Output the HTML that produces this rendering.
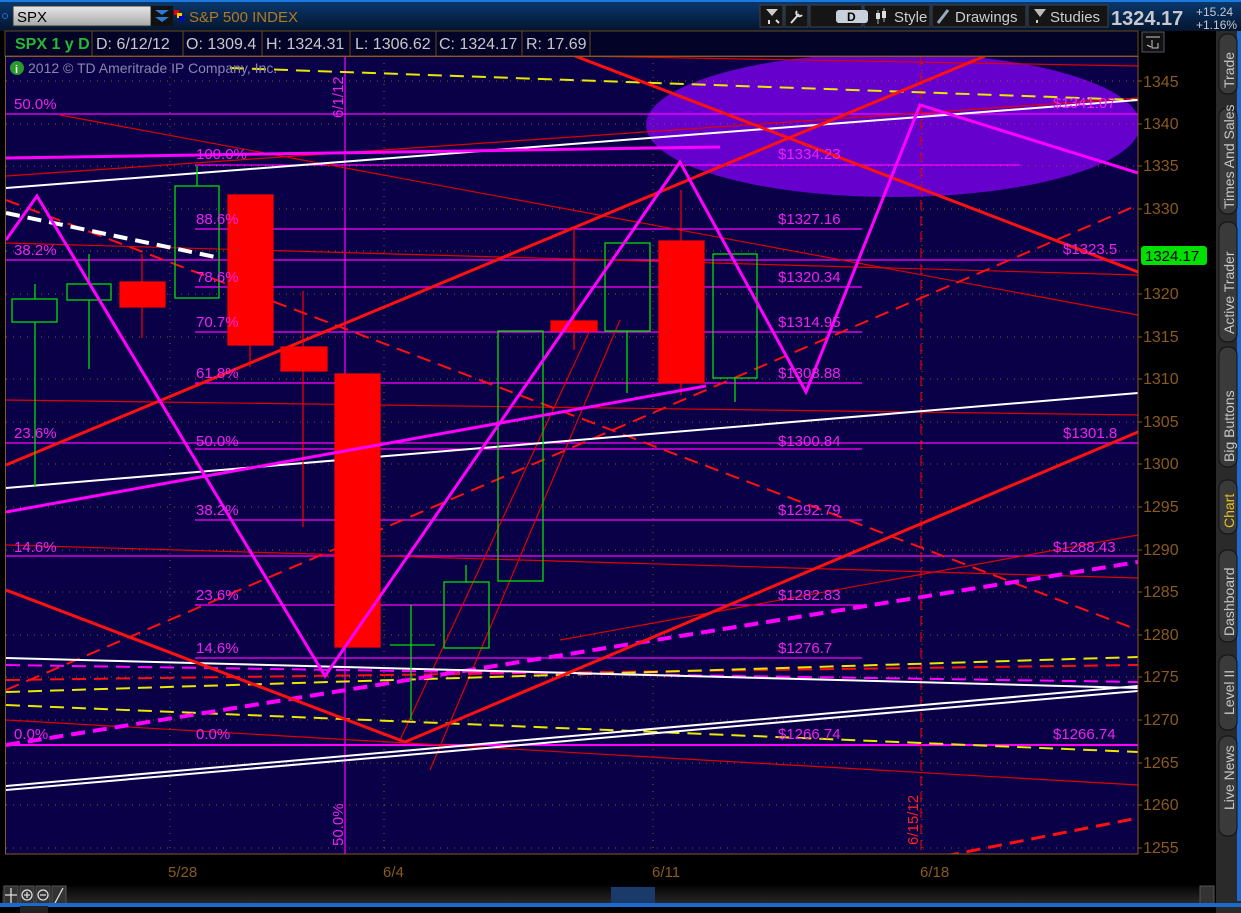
<!DOCTYPE html>
<html><head><meta charset="utf-8"><style>
html,body{margin:0;padding:0;width:1241px;height:913px;overflow:hidden;background:#000}
svg{display:block}
</style></head><body>
<svg width="1241" height="913" xmlns="http://www.w3.org/2000/svg" font-family="Liberation Sans, DejaVu Sans, sans-serif">
<defs>
<linearGradient id="tb" x1="0" y1="0" x2="0" y2="1"><stop offset="0" stop-color="#0a3a70"/><stop offset="1" stop-color="#04142e"/></linearGradient>
<linearGradient id="sb" x1="0" y1="0" x2="0" y2="1"><stop offset="0" stop-color="#050505"/><stop offset="1" stop-color="#2a2a2a"/></linearGradient>
<linearGradient id="inp" x1="0" y1="0" x2="0" y2="1"><stop offset="0" stop-color="#e8e8e8"/><stop offset="1" stop-color="#a8a8a8"/></linearGradient>
<clipPath id="pc"><rect x="6" y="56" width="1132" height="798"/></clipPath>
</defs>

<rect x="0" y="0" width="1241" height="31" fill="url(#tb)"/>
<rect x="0" y="0" width="1241" height="2" fill="#1a7ae0"/>
<circle cx="5" cy="16" r="2.5" fill="none" stroke="#2a6ad0"/>
<rect x="13" y="6" width="138" height="20" fill="url(#inp)" stroke="#333"/>
<text x="17" y="22" font-size="15" fill="#000">SPX</text>
<rect x="151" y="6" width="22" height="20" fill="#111"/>
<path d="M155 10 L169 10 L162 15 Z M155 17 L169 17 L162 22 Z" fill="#2a7ad8"/>
<rect x="174" y="10" width="5" height="5" fill="#e00"/><rect x="177" y="13" width="5" height="5" fill="#fc0"/><rect x="179" y="16" width="5" height="5" fill="#00c"/>
<text x="189" y="22" font-size="15" fill="#b07a20">S&amp;P 500 INDEX</text>
<g fill="#151515" stroke="#444">
<rect x="760" y="5" width="23" height="22"/><rect x="785" y="5" width="23" height="22"/><rect x="810" y="5" width="52" height="22"/>
<rect x="864" y="5" width="66" height="22"/><rect x="932" y="5" width="94" height="22"/><rect x="1028" y="5" width="80" height="22"/>
</g>
<rect x="836" y="10" width="32" height="13" rx="3" fill="#c8d0dc"/>
<text x="847" y="21" font-size="12" font-weight="bold" fill="#000">D</text>
<path d="M766 9 L778 9 L772 16 Z" fill="#ccc"/><path d="M769 20 v4 M776 20 l3 3" stroke="#ddd" stroke-width="2"/>
<path d="M791 23 L799 14" stroke="#ddd" stroke-width="2"/><path d="M797 11 a3 3 0 1 0 5 4" stroke="#ddd" stroke-width="2" fill="none"/>
<path d="M878 10 v14 M884 8 v14" stroke="#aaa"/><rect x="876" y="13" width="4" height="6" fill="#ddd"/><rect x="882" y="11" width="4" height="7" fill="#ddd"/>
<text x="894" y="22" font-size="15" fill="#ccc">Style</text>
<path d="M938 23 L948 10" stroke="#9ab" stroke-width="3"/>
<text x="955" y="22" font-size="15" fill="#ccc">Drawings</text>
<path d="M1034 9 L1046 9 L1040 17 Z" fill="#bbb"/><path d="M1037 20 v3" stroke="#ccc" stroke-width="2"/>
<text x="1050" y="22" font-size="15" fill="#ccc">Studies</text>
<text x="1111" y="25" font-size="20" font-weight="bold" fill="#c8c8d0">1324.17</text>
<text x="1196" y="16" font-size="12" fill="#c8c8d0">+15.24</text>
<text x="1196" y="29" font-size="12" fill="#c8c8d0">+1.16%</text>

<rect x="5" y="31" width="1133" height="25" fill="#030328"/>
<rect x="5" y="31" width="1133" height="25" fill="none" stroke="#6a4a1a"/>
<g stroke="#6a4a1a"><line x1="92" y1="31" x2="92" y2="56"/><line x1="183" y1="31" x2="183" y2="56"/><line x1="262" y1="31" x2="262" y2="56"/><line x1="350" y1="31" x2="350" y2="56"/><line x1="436" y1="31" x2="436" y2="56"/><line x1="522" y1="31" x2="522" y2="56"/><line x1="590" y1="31" x2="590" y2="56"/></g>
<g font-size="16" fill="#c8c8c8">
<text x="15" y="49" fill="#22bb33" font-weight="bold">SPX 1 y D</text>
<text x="96" y="49">D: 6/12/12</text><text x="186" y="49">O: 1309.4</text><text x="266" y="49">H: 1324.31</text>
<text x="355" y="49">L: 1306.62</text><text x="439" y="49">C: 1324.17</text><text x="526" y="49">R: 17.69</text>
</g>

<rect x="5" y="56" width="1133" height="798" fill="#0a0048"/>
<g clip-path="url(#pc)">
<ellipse cx="893" cy="125" rx="247" ry="72" fill="#6600cc"/>
<g stroke="#8a5a20" stroke-width="1" stroke-dasharray="1,6">
<line x1="6" y1="81" x2="1138" y2="81"/><line x1="6" y1="124" x2="1138" y2="124"/><line x1="6" y1="166" x2="1138" y2="166"/><line x1="6" y1="209" x2="1138" y2="209"/><line x1="6" y1="251" x2="1138" y2="251"/><line x1="6" y1="294" x2="1138" y2="294"/><line x1="6" y1="337" x2="1138" y2="337"/><line x1="6" y1="379" x2="1138" y2="379"/><line x1="6" y1="422" x2="1138" y2="422"/><line x1="6" y1="464" x2="1138" y2="464"/><line x1="6" y1="507" x2="1138" y2="507"/><line x1="6" y1="550" x2="1138" y2="550"/><line x1="6" y1="592" x2="1138" y2="592"/><line x1="6" y1="635" x2="1138" y2="635"/><line x1="6" y1="677" x2="1138" y2="677"/><line x1="6" y1="720" x2="1138" y2="720"/><line x1="6" y1="763" x2="1138" y2="763"/><line x1="6" y1="805" x2="1138" y2="805"/><line x1="6" y1="848" x2="1138" y2="848"/>
<line x1="170" y1="56" x2="170" y2="854"/><line x1="384" y1="56" x2="384" y2="854"/><line x1="653" y1="56" x2="653" y2="854"/><line x1="922" y1="56" x2="922" y2="854"/>
</g>

<g stroke="#ff00ff" stroke-width="1.2">
<line x1="6" y1="114" x2="1138" y2="114"/><line x1="195" y1="165" x2="1020" y2="165"/><line x1="195" y1="229" x2="862" y2="229"/>
<line x1="6" y1="260" x2="1138" y2="260"/><line x1="195" y1="287" x2="862" y2="287"/><line x1="195" y1="332" x2="862" y2="332"/>
<line x1="195" y1="383" x2="862" y2="383"/><line x1="6" y1="443" x2="1138" y2="443"/><line x1="195" y1="449" x2="862" y2="449"/>
<line x1="195" y1="520" x2="862" y2="520"/><line x1="6" y1="556" x2="1138" y2="556"/><line x1="195" y1="605" x2="862" y2="605"/>
<line x1="195" y1="658" x2="862" y2="658"/><line x1="6" y1="745" x2="1138" y2="745" stroke-width="2"/>
<line x1="345" y1="56" x2="345" y2="854"/>
</g>

<g stroke="#e00000" stroke-width="1.2" fill="none">
<line x1="6" y1="243" x2="1138" y2="275"/><line x1="6" y1="545" x2="1138" y2="578"/><line x1="6" y1="400" x2="1138" y2="415"/>
<line x1="6" y1="720" x2="1138" y2="785"/><line x1="60" y1="115" x2="1138" y2="315"/><line x1="6" y1="176" x2="1138" y2="98"/>
<line x1="400" y1="740" x2="590" y2="330"/><line x1="430" y1="770" x2="620" y2="320"/><line x1="560" y1="640" x2="1138" y2="535"/>
<line x1="575" y1="56" x2="1138" y2="66"/>
</g>
<line x1="921" y1="56" x2="921" y2="854" stroke="#e00000" stroke-width="1.2" stroke-dasharray="10,6"/>

<g fill="none" stroke-width="2" stroke-dasharray="14,8">
<line x1="6" y1="200" x2="1138" y2="630" stroke="#ff1010"/>
<line x1="6" y1="690" x2="1138" y2="205" stroke="#ff1010"/>
<line x1="945" y1="856" x2="1138" y2="818" stroke="#ff1010" stroke-width="3"/>
<line x1="6" y1="680" x2="1138" y2="665" stroke="#ff1010"/>
<line x1="230" y1="68" x2="1138" y2="100" stroke="#e8e800"/>
<line x1="6" y1="705" x2="1138" y2="752" stroke="#e8e800"/>
<line x1="6" y1="692" x2="1138" y2="657" stroke="#e8e800"/>
<line x1="6" y1="665" x2="1138" y2="682" stroke="#ff00ff"/>
<line x1="6" y1="745" x2="1138" y2="562" stroke="#ff00ff" stroke-width="4"/>
<line x1="6" y1="213" x2="220" y2="258" stroke="#ffffff" stroke-width="4"/>
</g>

<g stroke="#ffffff" stroke-width="2" fill="none">
<line x1="6" y1="188" x2="1138" y2="100"/><line x1="6" y1="488" x2="1138" y2="393"/>
<line x1="6" y1="658" x2="1138" y2="688"/><line x1="6" y1="786" x2="1138" y2="686"/><line x1="6" y1="790" x2="1138" y2="691"/>
</g>

<g stroke="#ff1010" stroke-width="3" fill="none">
<line x1="6" y1="465" x2="985" y2="56"/><polyline points="6,590 405,742 1138,432"/>
<line x1="575" y1="56" x2="1138" y2="272"/>
</g>

<g stroke="#00dd00" stroke-width="1.3" fill="none">
<line x1="35" y1="284" x2="35" y2="487"/><rect x="12" y="299" width="45" height="23" fill="#0a0048"/>
<line x1="89" y1="254" x2="89" y2="369"/><rect x="67" y="284" width="44" height="16" fill="#0a0048"/>
<line x1="197" y1="166" x2="197" y2="186"/><rect x="175" y="186" width="44" height="112"/>
<line x1="411" y1="605" x2="411" y2="720"/><line x1="390" y1="645" x2="435" y2="645"/>
<line x1="466" y1="565" x2="466" y2="582"/><rect x="444" y="582" width="45" height="66"/>
<rect x="498" y="331" width="45" height="250"/>
<line x1="627" y1="331" x2="627" y2="393"/><rect x="605" y="243" width="45" height="88"/>
<line x1="735" y1="378" x2="735" y2="402"/><rect x="713" y="254" width="44" height="124"/>
</g>
<g fill="#ff0000" stroke="#ff0000" stroke-width="1.2">
<line x1="142" y1="254" x2="142" y2="338"/><rect x="120" y="282" width="45" height="25"/>
<line x1="250" y1="345" x2="250" y2="367"/><rect x="228" y="195" width="45" height="150"/>
<line x1="303" y1="291" x2="303" y2="527"/><rect x="281" y="347" width="46" height="24"/>
<rect x="335" y="374" width="45" height="273"/>
<line x1="574" y1="230" x2="574" y2="350"/><rect x="551" y="321" width="46" height="10"/>
<line x1="681" y1="190" x2="681" y2="395"/><rect x="659" y="241" width="45" height="142"/>
</g>

<g stroke="#ff00ff" fill="none" stroke-width="3">
<polyline points="6,240 37,196 325,676 680,162 806,392 920,105 1138,173"/>
<line x1="6" y1="158" x2="720" y2="147"/>
<line x1="6" y1="512" x2="706" y2="386"/>
</g>

<g font-size="15" fill="#ee22ee">
<text x="14" y="109">50.0%</text><text x="14" y="255">38.2%</text><text x="14" y="438">23.6%</text><text x="14" y="552">14.6%</text><text x="14" y="739">0.0%</text>
<text x="196" y="159">100.0%</text><text x="196" y="224">88.6%</text><text x="196" y="282">78.6%</text><text x="196" y="327">70.7%</text><text x="196" y="378">61.8%</text><text x="196" y="446">50.0%</text><text x="196" y="515">38.2%</text><text x="196" y="600">23.6%</text><text x="196" y="653">14.6%</text><text x="196" y="739">0.0%</text>
<text x="778" y="159">$1334.23</text><text x="778" y="224">$1327.16</text><text x="778" y="282">$1320.34</text><text x="778" y="327">$1314.95</text><text x="778" y="378">$1308.88</text><text x="778" y="446">$1300.84</text><text x="778" y="515">$1292.79</text><text x="778" y="600">$1282.83</text><text x="778" y="653">$1276.7</text><text x="778" y="739">$1266.74</text>
<text x="1053" y="108">$1341.07</text><text x="1063" y="254">$1323.5</text><text x="1063" y="438">$1301.8</text><text x="1053" y="552">$1288.43</text><text x="1053" y="739">$1266.74</text>
<text transform="translate(343,118) rotate(-90)">6/1/12</text>
<text transform="translate(343,846) rotate(-90)">50.0%</text>
</g>
<text transform="translate(918,845) rotate(-90)" font-size="15" fill="#ff2020">6/15/12</text>
<circle cx="17" cy="68" r="7" fill="#2a9a2a"/><text x="15" y="73" font-size="11" font-weight="bold" fill="#fff">i</text>
<text x="28" y="73" font-size="14" fill="#8888aa">2012 © TD Ameritrade IP Company, Inc.</text>
</g>
<rect x="5.5" y="56.5" width="1132.5" height="797.5" fill="none" stroke="#8a5a20"/>

<g font-size="16" fill="#8a5a20">
<text x="1143" y="87">1345</text><text x="1143" y="129">1340</text><text x="1143" y="171">1335</text><text x="1143" y="214">1330</text><text x="1143" y="299">1320</text><text x="1143" y="342">1315</text><text x="1143" y="384">1310</text><text x="1143" y="427">1305</text><text x="1143" y="469">1300</text><text x="1143" y="512">1295</text><text x="1143" y="555">1290</text><text x="1143" y="597">1285</text><text x="1143" y="640">1280</text><text x="1143" y="682">1275</text><text x="1143" y="725">1270</text><text x="1143" y="768">1265</text><text x="1143" y="810">1260</text><text x="1143" y="853">1255</text>
</g>
<g stroke="#8a5a20"><line x1="1138" y1="81" x2="1142" y2="81"/><line x1="1138" y1="124" x2="1142" y2="124"/><line x1="1138" y1="166" x2="1142" y2="166"/><line x1="1138" y1="209" x2="1142" y2="209"/><line x1="1138" y1="294" x2="1142" y2="294"/><line x1="1138" y1="337" x2="1142" y2="337"/><line x1="1138" y1="379" x2="1142" y2="379"/><line x1="1138" y1="422" x2="1142" y2="422"/><line x1="1138" y1="464" x2="1142" y2="464"/><line x1="1138" y1="507" x2="1142" y2="507"/><line x1="1138" y1="550" x2="1142" y2="550"/><line x1="1138" y1="592" x2="1142" y2="592"/><line x1="1138" y1="635" x2="1142" y2="635"/><line x1="1138" y1="677" x2="1142" y2="677"/><line x1="1138" y1="720" x2="1142" y2="720"/><line x1="1138" y1="763" x2="1142" y2="763"/><line x1="1138" y1="805" x2="1142" y2="805"/><line x1="1138" y1="848" x2="1142" y2="848"/></g>
<rect x="1141" y="246" width="66" height="19" rx="3" fill="#00e000"/>
<text x="1145" y="261" font-size="15" fill="#000">1324.17</text>
<rect x="1142" y="32" width="22" height="20" fill="#111" stroke="#556"/>
<path d="M1146 37 h14 M1147 45 l4 2 M1152 40 v8 h6 v-5" stroke="#ccc" fill="none"/>

<rect x="1216" y="31" width="25" height="882" fill="#2a2a2a"/>
<rect x="1237" y="31" width="4" height="870" fill="#1a6ad0"/>
<g fill="#3a3a3a" stroke="#111">
<rect x="1219" y="34" width="18" height="60" rx="8"/><rect x="1219" y="108" width="18" height="106" rx="8"/><rect x="1219" y="222" width="18" height="120" rx="8"/><rect x="1219" y="347" width="18" height="120" rx="8"/><rect x="1219" y="480" width="18" height="54" rx="8"/><rect x="1219" y="550" width="18" height="92" rx="8"/><rect x="1219" y="655" width="18" height="75" rx="8"/><rect x="1219" y="736" width="18" height="100" rx="8"/>
</g>
<g font-size="14" fill="#c8c8c8">
<text transform="translate(1234,88) rotate(-90)">Trade</text>
<text transform="translate(1234,209) rotate(-90)">Times And Sales</text>
<text transform="translate(1234,334) rotate(-90)">Active Trader</text>
<text transform="translate(1234,462) rotate(-90)">Big Buttons</text>
<text transform="translate(1234,528) rotate(-90)" fill="#e8c020">Chart</text>
<text transform="translate(1234,636) rotate(-90)">Dashboard</text>
<text transform="translate(1234,715) rotate(-90)">Level II</text>
<text transform="translate(1234,810) rotate(-90)">Live News</text>
</g>

<g font-size="15" fill="#8a5a20">
<text x="168" y="877">5/28</text><text x="383" y="877">6/4</text><text x="652" y="877">6/11</text><text x="920" y="877">6/18</text>
</g>
<rect x="2" y="886" width="1212" height="19" fill="url(#sb)"/>
<g fill="#333" stroke="#555"><rect x="4" y="886" width="14" height="19"/><rect x="20" y="886" width="14" height="19"/><rect x="36" y="886" width="14" height="19"/><rect x="52" y="886" width="14" height="19"/><rect x="1200" y="886" width="14" height="19"/></g>
<g stroke="#ddd" fill="none" stroke-width="1.3"><path d="M11 888 v15 M5 895 h12"/><circle cx="27" cy="895" r="5"/><path d="M24 895 h6 M27 892 v6"/><circle cx="43" cy="895" r="5"/><path d="M40 895 h6"/><path d="M55 903 L63 888"/></g>
<rect x="611" y="887" width="44" height="17" fill="#1a3a6a"/>
<rect x="0" y="903" width="1241" height="4" fill="#1a6ad0"/>
<rect x="20" y="906" width="28" height="7" fill="#222"/>
</svg>
</body></html>
